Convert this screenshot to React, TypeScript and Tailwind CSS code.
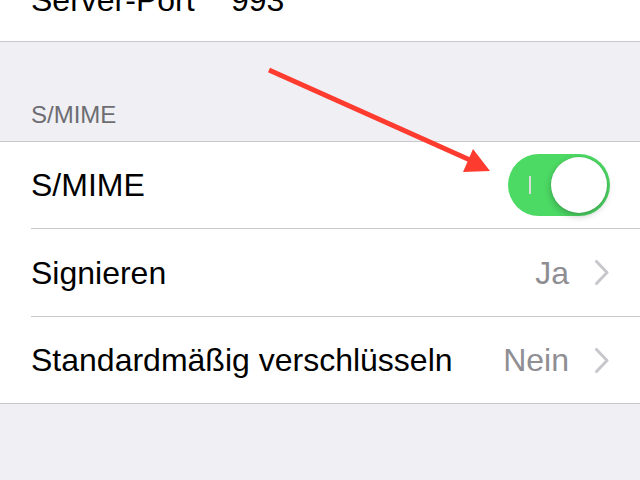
import React from 'react';

const font = { fontFamily: '"Liberation Sans", Arial, sans-serif' };

const Chevron: React.FC = () => (
  <svg width="14" height="25" viewBox="0 0 14 25" className="shrink-0" aria-hidden>
    <path d="M1.5 1.5 L12 12.5 L1.5 23.5" fill="none" stroke="#c7c7cc" strokeWidth="3" strokeLinecap="round" strokeLinejoin="round" />
  </svg>
);

const Toggle: React.FC<{ on: boolean }> = ({ on }) => (
  <div
    className={`relative flex h-[62px] w-[102px] shrink-0 items-center rounded-full ${
      on ? 'bg-[#4cd964]' : 'bg-[#e5e5ea]'
    }`}
  >
    <span className="ml-[21px] h-[18px] w-[2px] bg-[#dcdcdc]" />
    <span className="absolute right-[3px] top-[3px] h-[56px] w-[56px] rounded-full bg-white shadow-[0_3px_7px_rgba(0,0,0,0.25),0_0_0_0.5px_rgba(0,0,0,0.08)]" />
  </div>
);

type Row = { label: string; value?: string; toggle?: boolean; height: string };

// heights include the 1px inset separator (border-box)
const rows: Row[] = [
  { label: 'S/MIME', toggle: true, height: 'h-[87px]' },
  { label: 'Signieren', value: 'Ja', height: 'h-[88px]' },
  { label: 'Standardmäßig verschlüsseln', value: 'Nein', height: 'h-[86px]' },
];

export default function App() {
  return (
    <div className="relative h-[480px] w-[640px] overflow-hidden bg-[#efeff4]" style={font}>
      {/* row cut off at the top */}
      <div className="flex h-[42px] items-end border-b border-[#c8c7cc] bg-white pb-[25px] pl-[31px] text-[32px] leading-[32px] text-black">
        <span className="w-[200px]">Server-Port</span>
        <span>993</span>
      </div>

      <div className="flex h-[99px] items-end pb-[14px] pl-[31px] text-[24px] leading-[24px] text-[#6d6d72]">
        S/MIME
      </div>

      <div className="border-y border-[#c8c7cc] bg-white">
        {rows.map((row, i) => {
          const last = i === rows.length - 1;
          return (
            <div key={row.label} className="pl-[31px]">
              <div
                className={`flex items-center justify-between pr-[30px] ${row.height} ${
                  last ? '' : 'border-b border-[#c8c7cc]'
                }`}
              >
                <span className="text-[32px] leading-[32px] text-black">{row.label}</span>
                {row.toggle ? (
                  <Toggle on />
                ) : (
                  <div className="flex items-center gap-[26px] pr-[1px]">
                    <span className="text-[32px] leading-[32px] text-[#8e8e93]">{row.value}</span>
                    <Chevron />
                  </div>
                )}
              </div>
            </div>
          );
        })}
      </div>

      {/* red annotation arrow */}
      <svg className="pointer-events-none absolute left-0 top-0" width="640" height="480" aria-hidden>
        <line x1="269" y1="70" x2="470" y2="160" stroke="#fe3b2f" strokeWidth="5" />
        <polygon points="490,171 473,149 463,172" fill="#fe3b2f" />
      </svg>
    </div>
  );
}
